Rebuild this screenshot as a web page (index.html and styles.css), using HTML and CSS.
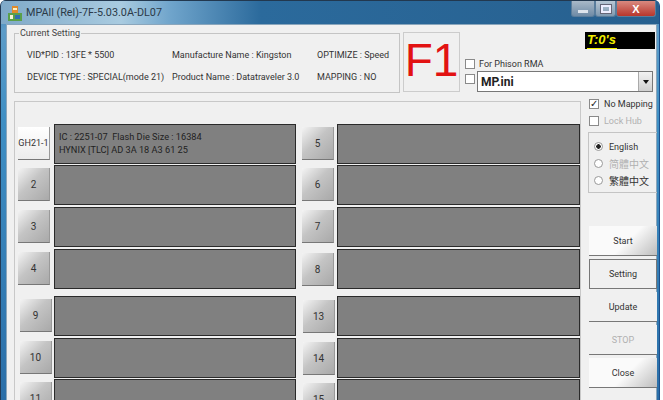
FILE: index.html
```html
<!DOCTYPE html>
<html>
<head>
<meta charset="utf-8">
<title>MPAll</title>
<link rel="stylesheet" href="styles.css">
</head>
<body>
<div class="window">
  <div class="titlebar">
    <svg class="app-icon" width="16" height="16" viewBox="0 0 16 16"><rect x="5" y="0" width="6" height="7" fill="#e08a2a"/><rect x="6" y="2" width="4" height="2" fill="#fff2c0"/><rect x="1" y="7" width="14" height="8" fill="#5aa04a"/><rect x="3" y="9" width="3" height="4" fill="#f4f4d8"/><rect x="8" y="9" width="5" height="4" fill="#2f6fb0"/></svg>
    <span class="title">MPAll (Rel)-7F-5.03.0A-DL07</span>
    <div class="caption">
      <div class="cap cap-min"><i class="min-glyph"></i></div>
      <div class="cap cap-max"><i class="max-glyph"></i></div>
      <div class="cap cap-close">X</div>
    </div>
  </div>
  <div class="client">
    <div class="top">
      <fieldset class="setting">
        <legend>Current Setting</legend>
        <div class="setting-grid">
          <span>VID*PID : 13FE * 5500</span><span>Manufacture Name : Kingston</span><span>OPTIMIZE : Speed</span>
          <span>DEVICE TYPE : SPECIAL(mode 21)</span><span>Product Name : Datatraveler 3.0</span><span>MAPPING : NO</span>
        </div>
      </fieldset>
      <div class="f1">F1</div>
      <div class="top-right">
        <div class="timer-row"><div class="timer"><span class="timer-text">T:0's</span></div></div>
        <label class="check rma"><i class="box"></i>For Phison RMA</label>
        <div class="ini-row">
          <i class="box"></i>
          <div class="combo"><span>MP.ini</span><span class="combo-btn"><i class="arrow"></i></span></div>
        </div>
      </div>
    </div>
    <div class="bottom">
      <div class="ports">
        <div class="ports-grid">
          <div class="col">
            <div class="slot s41"><button class="btn cur">GH21-1</button><div class="panel">IC : 2251-07&nbsp; Flash Die Size : 16384<br>HYNIX [TLC] AD 3A 18 A3 61 25</div></div>
            <div class="slot s42"><button class="btn">2</button><div class="panel"></div></div>
            <div class="slot s42"><button class="btn">3</button><div class="panel"></div></div>
            <div class="slot s47"><button class="btn">4</button><div class="panel"></div></div>
            <div class="slot s42"><button class="btn shift">9</button><div class="panel"></div></div>
            <div class="slot s41"><button class="btn shift">10</button><div class="panel"></div></div>
            <div class="slot s41"><button class="btn shift">11</button><div class="panel"></div></div>
          </div>
          <div class="col">
            <div class="slot s41"><button class="btn">5</button><div class="panel"></div></div>
            <div class="slot s42"><button class="btn">6</button><div class="panel"></div></div>
            <div class="slot s42"><button class="btn">7</button><div class="panel"></div></div>
            <div class="slot s47"><button class="btn low">8</button><div class="panel"></div></div>
            <div class="slot s42"><button class="btn low nudge">13</button><div class="panel"></div></div>
            <div class="slot s41"><button class="btn low nudge">14</button><div class="panel"></div></div>
            <div class="slot s41"><button class="btn low nudge">15</button><div class="panel"></div></div>
          </div>
        </div>
      </div>
      <div class="side">
        <label class="check"><i class="box on">&#10003;</i>No Mapping</label>
        <label class="check off"><i class="box"></i>Lock Hub</label>
        <div class="lang">
          <label class="radio"><i class="dot on"></i>English</label>
          <label class="radio off cjk"><i class="dot"></i>简體中文</label>
          <label class="radio cjk"><i class="dot"></i>繁體中文</label>
        </div>
        <div class="actions">
          <button class="act glossy">Start</button>
          <button class="act focus">Setting</button>
          <button class="act">Update</button>
          <button class="act off">STOP</button>
          <button class="act glossy">Close</button>
        </div>
      </div>
    </div>
  </div>
</div>
</body>
</html>
```
FILE: styles.css
```css
* { box-sizing: border-box; }
html, body { margin: 0; height: 400px; overflow: hidden; background: #fff; }
body { font-family: Roboto, "Noto Sans CJK TC", sans-serif; font-size: 9px; color: #333; }
.window {
  width: 660px; height: 400px; overflow: hidden;
  background: linear-gradient(180deg, #3d7fb0 0, #5d9cc8 30px, #3f8fc4 120px, #2a6ea8 400px);
  border-left: 1px solid #223a55; border-right: 1px solid #1d4f8a;
  border-radius: 6px 6px 0 0;
  padding: 0 2px 0 5px;
}
.titlebar {
  height: 24px; display: flex; align-items: center; margin: 0 -2px 0 -5px; padding: 0 3px 0 6px;
  background: linear-gradient(90deg, #7fa9c8 0, #a9cbe0 120px, #6fa4cb 170px, #2b6a9c 260px, #27608f 100%);
  border-top: 1px solid #22384f;
}
.app-icon { margin: 2px 3px 0 0; flex: none; }
.title { font-size: 10.8px; color: #2b3a48; }
.caption { margin-left: auto; align-self: flex-start; display: flex; height: 16px; }
.cap { height: 16px; border: 1px solid #5a7d9c; border-top: 0; border-radius: 0 0 3px 3px; display: flex; align-items: center; justify-content: center; }
.cap-min { width: 24px; background: linear-gradient(#a9b9c8, #6f8ba6); }
.cap-max { width: 21px; background: linear-gradient(#b9c7d4, #7f99b0); }
.cap-close { width: 40px; background: linear-gradient(#d88a80, #b8362c); color: #fff; font: bold 11px "Liberation Sans", sans-serif; }
.min-glyph { width: 10px; height: 3px; background: #dde4ec; display: block; margin-top: 6px; }
.max-glyph { width: 10px; height: 8px; border: 2px solid #eef; outline: 1px solid #667; display: block; }
.client { background: #f0f0f0; height: 376px; border: 1px solid #8aa6bc; border-width: 1px 1px 0 1px; }
.top { display: flex; height: 76px; }
.setting { margin: 2px 0 0 7px; padding: 0; width: 386px; height: 66px; border: 1px solid #c4c4c4; }
.setting legend { padding: 0 1px; margin-left: 4px; font-size: 9px; line-height: 12px; color: #444; }
.setting-grid { display: grid; grid-template-columns: 145px 145px auto; row-gap: 9px; padding: 10px 0 0 12px; line-height: 13px; white-space: nowrap; }
.f1 { width: 57px; height: 60px; margin: 7px 0 0 3px; border: 1px solid #ccc; color: #e21212; font: 46px/55px "Liberation Sans", sans-serif; text-align: center; }
.top-right { flex: 1; padding-left: 5px; margin-top: 7px; }
.timer-row { display: flex; justify-content: flex-end; height: 18px; padding-right: 1px; }
.timer { width: 70px; height: 17px; background: #000; padding-left: 2px; }
.timer-text { color: #f2f000; font: italic bold 13px/16px "Liberation Sans", sans-serif; border-bottom: 1px solid #f2f000; display: inline-block; height: 17px; padding-right: 1px; }
.check, .radio { display: flex; align-items: center; white-space: nowrap; }
.box { width: 10px; height: 10px; border: 1px solid #8a8a8a; background: #fff; margin-right: 4px; flex: none; display: block; font: bold 10px/8px "DejaVu Sans", sans-serif; color: #222; }
.rma { height: 13px; margin-top: 7px; }
.ini-row { display: flex; align-items: flex-start; margin-top: 1px; }
.ini-row .box { margin-right: 2px; margin-top: 3px; }
.combo { width: 176px; height: 21px; display: flex; justify-content: space-between; align-items: center; background: #fff; border: 1px solid #777; padding-left: 3px; font: bold 12px Roboto, sans-serif; color: #222; }
.combo-btn { width: 14px; height: 19px; background: linear-gradient(#f2f2f2, #cfcfcf); border-left: 1px solid #aaa; display: flex; align-items: center; justify-content: center; }
.arrow { border: 3px solid transparent; border-top: 4px solid #111; margin-top: 4px; display: block; }
.bottom { display: flex; height: 300px; }
.ports { width: 567px; margin-left: 7px; border: 1px solid #c8c8c8; border-bottom: 0; padding: 22px 0 0 2px; }
.ports-grid { display: flex; gap: 6px; }
.col { width: 279px; }
.slot { display: flex; align-items: flex-start; gap: 4px; }
.s41 { height: 41px; }
.s42 { height: 42px; }
.s47 { height: 47px; }
.panel { width: 243px; height: 40px; background: #808080; border: 1px solid #2a2a2a; color: #222; padding: 5px 0 0 4px; line-height: 13px; font-size: 9.2px; }
.col + .col .panel { margin-left: -1px; }
.btn { width: 32px; height: 33px; margin-top: 3px; padding: 0; font: 10px Roboto, sans-serif; color: #333; border: 0; border-bottom: 1px solid #777; border-right: 1px solid #999; background: linear-gradient(135deg, #f4f4f4, #c4c4c4 45%, #a9a9a9); white-space: nowrap; }
.col:first-child .btn { margin-left: 1px; }
.btn.cur { background: linear-gradient(#fff, #ececec); font-size: 9px; }
.col:first-child .btn.shift { margin-left: 3px; margin-right: -2px; }
.btn.low { margin-top: 4px; }
.btn.nudge { margin-left: 1px; margin-right: -1px; }
.side { width: 69px; margin-left: 7px; margin-top: -6px; }
.side > .check { height: 17px; }
.side .box { margin-left: 1px; margin-right: 5px; }
.check.off, .radio.off, .act.off { color: #b0b0b0; }
.box.on { text-align: center; }
.lang { margin-top: 3px; height: 61px; border: 1px solid #c4c4c4; border-right: 0; padding: 5px 0 0 5px; }
.radio { height: 17px; }
.radio.cjk { font-size: 10px; }
.dot { width: 9px; height: 9px; border-radius: 50%; border: 1px solid #999; background: #fff; margin-right: 6px; display: block; flex: none; }
.dot.on { background: radial-gradient(circle, #222 0 2px, #fff 2.5px); }
.actions { margin-top: 33px; display: flex; flex-direction: column; gap: 3px; }
.act { width: 68px; height: 30px; margin-left: 1px; padding: 0; font: 9px Roboto, sans-serif; color: #333; border: 0; border-bottom: 1px solid #777; background: #f0f0f0; }
.act.glossy { background: linear-gradient(135deg, #fafafa 55%, #bdbdbd); }
.act.focus { border: 1px solid #777; }
```
